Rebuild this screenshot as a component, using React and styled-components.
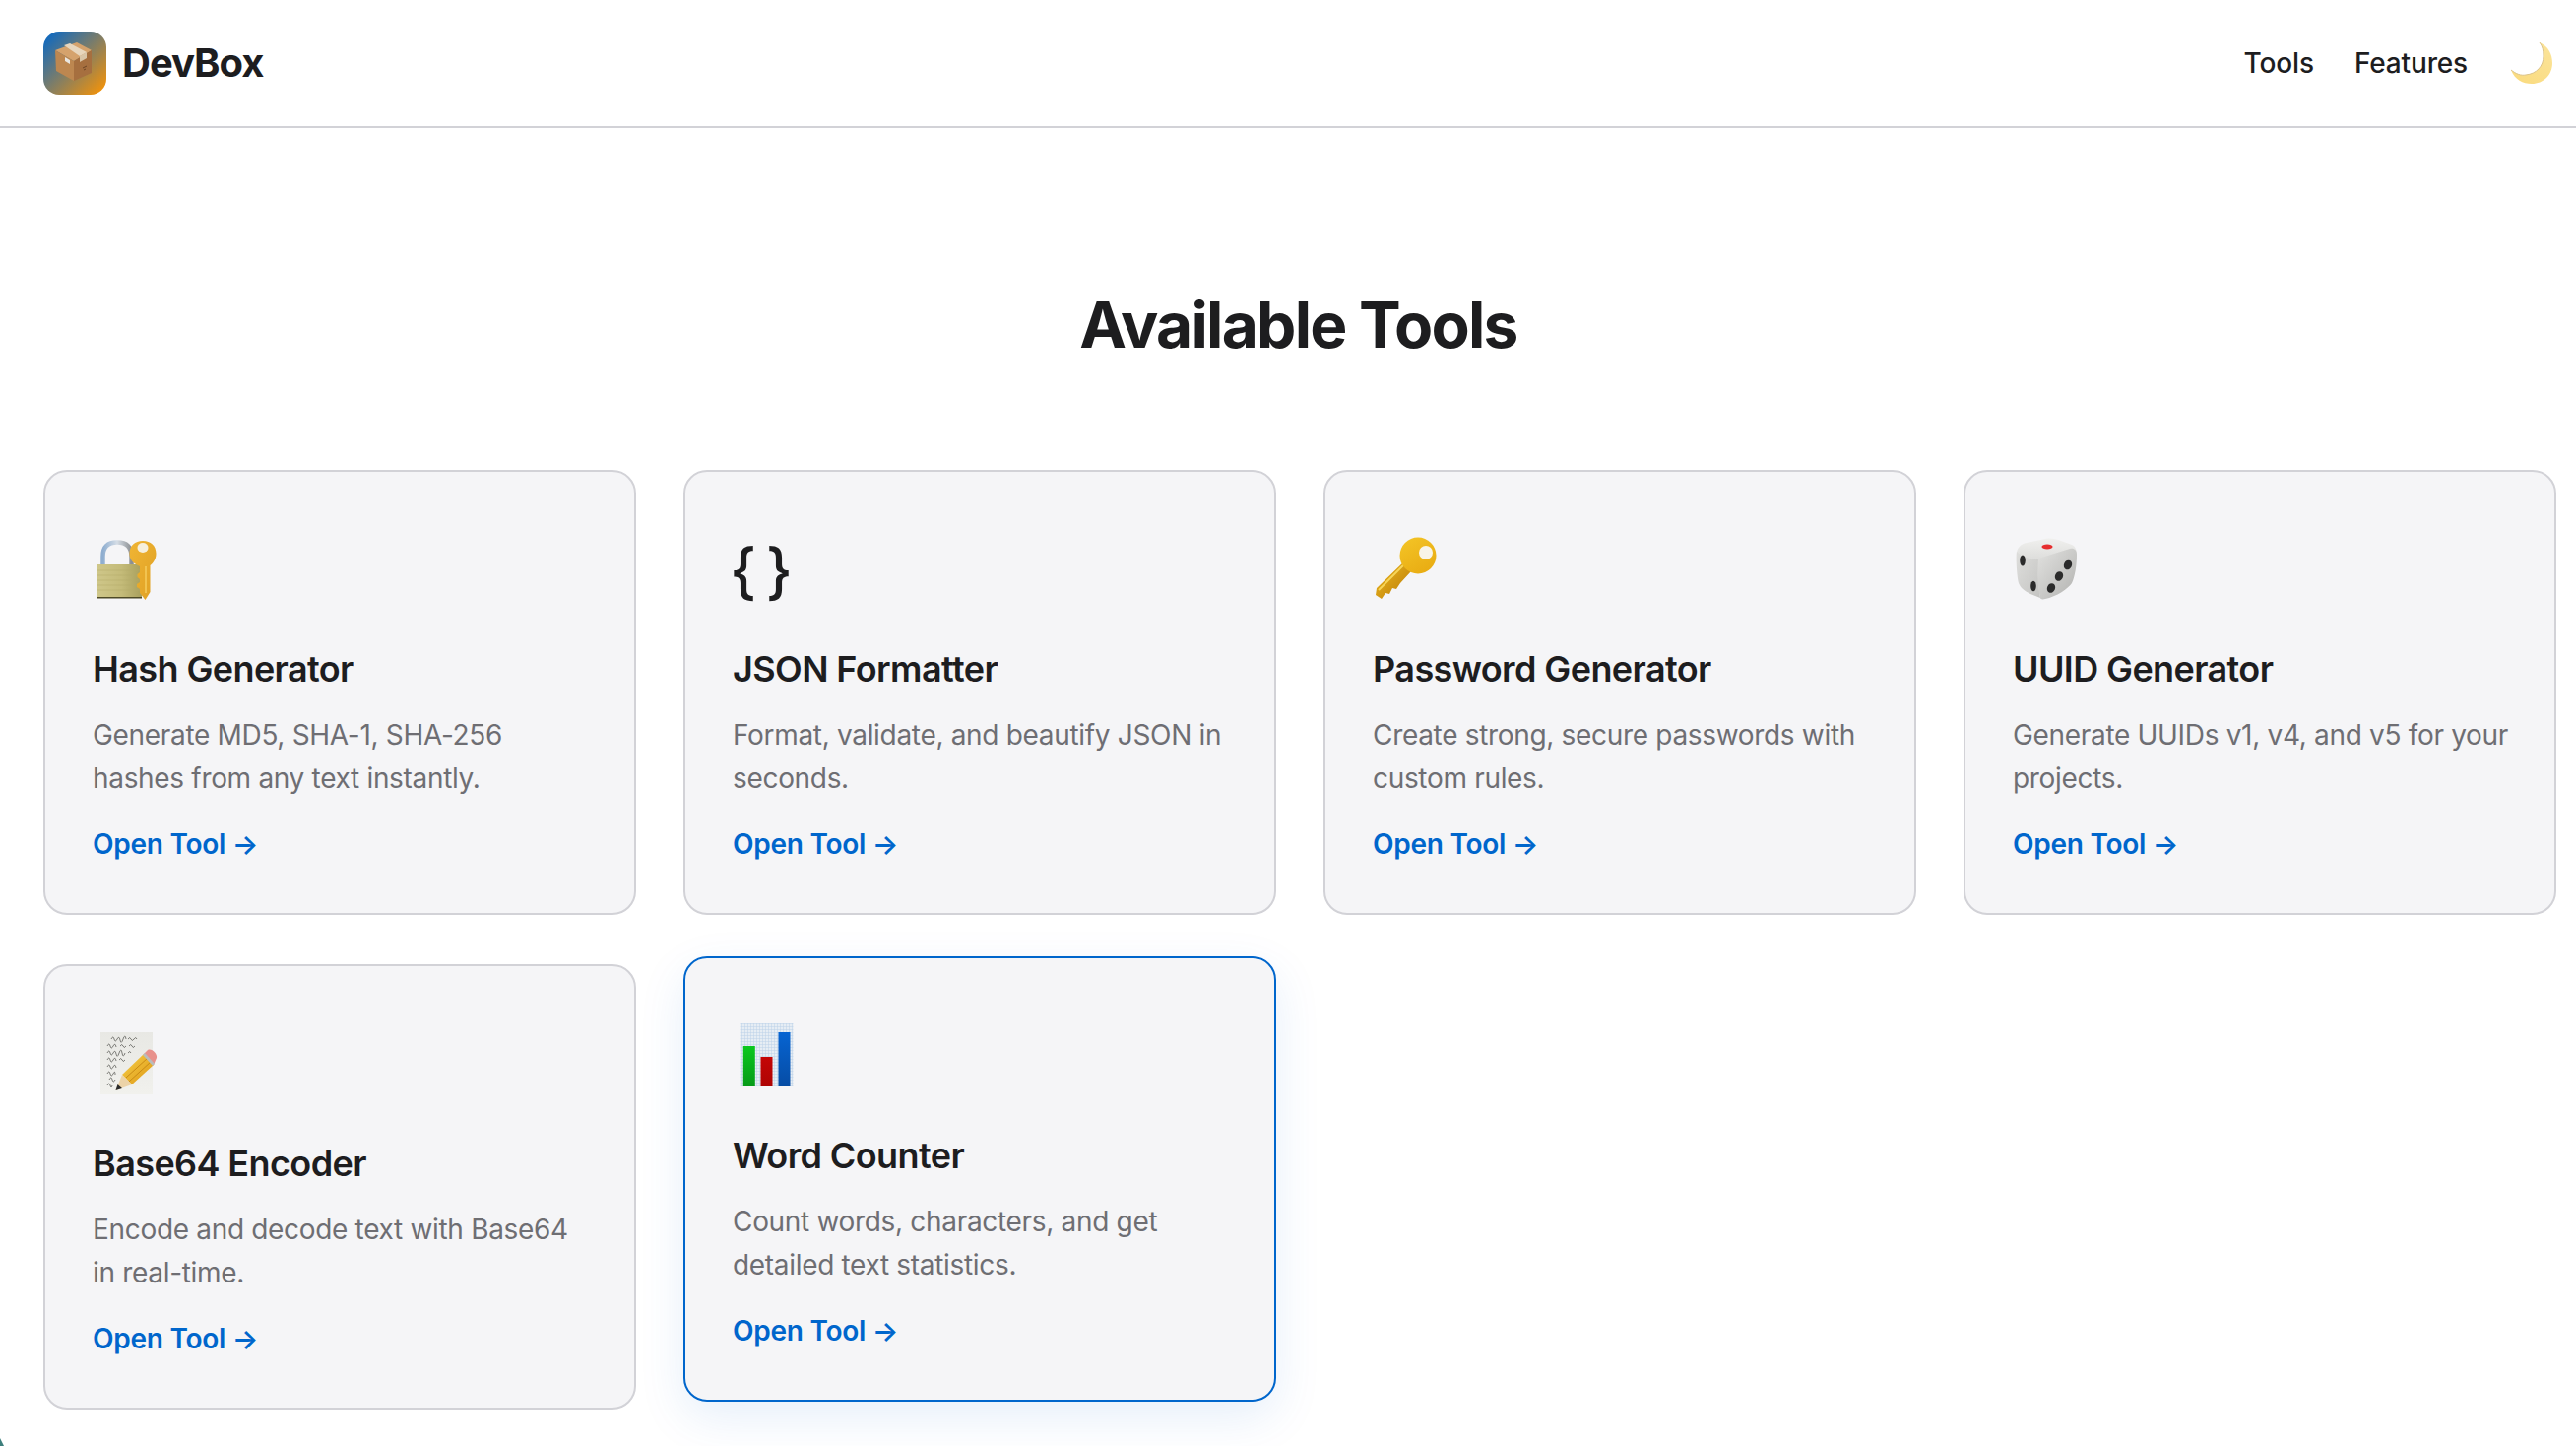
import React from 'react'
import styled, { createGlobalStyle } from 'styled-components'

const GlobalStyle = createGlobalStyle`
  * { box-sizing: border-box; }
  html, body { margin: 0; padding: 0; background: #fff; }
  body {
    font-family: Inter, "Liberation Sans", sans-serif;
    color: #1d1d1f;
    overflow: hidden;
  }
`

const Page = styled.div`
  position: relative;
  width: 2616px;
  height: 1468px;
  overflow: hidden;
`

const Header = styled.header`
  height: 130px;
  border-bottom: 2px solid #d2d2d7;
  padding: 0 24px 0 44px;
  display: flex;
  align-items: center;
  justify-content: space-between;
`

const Brand = styled.div`
  display: flex;
  align-items: center;
  gap: 16px;
`

const LogoTile = styled.div`
  width: 64px;
  height: 64px;
  border-radius: 16px;
  background: linear-gradient(135deg, #0066cc, #ff9500);
`

const BrandName = styled.span`
  font-size: 40px;
  font-weight: 700;
  letter-spacing: -1px;
  margin-top: -2px;
`

const Nav = styled.nav`
  display: flex;
  align-items: center;
  gap: 41px;
`

const NavLink = styled.a`
  font-size: 28px;
  font-weight: 500;
  letter-spacing: -0.15px;
  color: #1d1d1f;
`

const ThemeToggle = styled.button`
  display: flex;
  border: 0;
  padding: 0;
  margin-left: 3px;
  background: none;
`

const Main = styled.main`
  padding: 0 20px 0 44px;
`

const Heading = styled.h1`
  margin: 0;
  padding: 160px 3px 84px 0;
  height: 347px;
  font-size: 64px;
  line-height: 80px;
  font-weight: 700;
  letter-spacing: -1.75px;
  text-align: center;
`

const Grid = styled.div`
  display: grid;
  grid-template-columns: repeat(4, minmax(0, 1fr));
  gap: 50px 48px;
`

const Card = styled.article`
  height: 452px;
  padding: 48px;
  border-radius: 24px;
  background: #f5f5f7;
  border: 2px solid ${({ $active }) => ($active ? '#0066cc' : '#d2d2d7')};
  transform: ${({ $active }) => ($active ? 'translateY(-8px)' : 'none')};
  box-shadow: ${({ $active }) => ($active ? '0 16px 48px rgba(0, 102, 204, 0.1)' : 'none')};
`

const IconSlot = styled.div`
  height: 100px;
  display: flex;
  align-items: center;
`

const Braces = styled.span`
  font-size: 62px;
  line-height: 100px;
  font-weight: 500;
  white-space: nowrap;
  word-spacing: -7px;
  margin-left: -3px;
  padding-top: 6px;
`

const CardTitle = styled.h3`
  margin: 27px 0 0;
  font-size: 36px;
  line-height: 50px;
  font-weight: 600;
  letter-spacing: -0.6px;
`

const CardText = styled.p`
  margin: 20px 0 0;
  font-size: 28px;
  line-height: 44px;
  letter-spacing: -0.32px;
  white-space: nowrap;
  color: #6e6e73;
`

const OpenLink = styled.a`
  display: block;
  margin-top: 23px;
  font-size: 28px;
  line-height: 44px;
  font-weight: 600;
  letter-spacing: -0.27px;
  color: #0066cc;
`

const CornerSliver = styled.div`
  position: absolute;
  left: 0;
  bottom: 0;
  width: 4px;
  height: 8px;
  background: #3d7f7c;
  clip-path: polygon(0 0, 100% 100%, 0 100%);
`

function PackageIcon() {
  return (
    <svg width="64" height="64" viewBox="0 0 64 64">
      <path d="M34 11 L49 19 L31 30 L12 19 Z" fill="#d5a26c" />
      <path d="M12 19 L31 30 L31 50 L13 40 Z" fill="#bd8750" />
      <path d="M31 30 L49 19 L49 42 L31 50 Z" fill="#a66f3f" />
      <path d="M21 14 L27 12 L44 21 L37 25 Z" fill="#e8d6bd" />
      <path d="M37 25 L44 21 L44 27 L37 31 Z" fill="#d9c5a8" />
      <path d="M22 26 L27 29 L27 33 L22 30 Z" fill="#e9e6e0" />
      <path d="M40 37 L44 35 M41 39 L43 38" stroke="#6d4525" strokeWidth="1" />
    </svg>
  )
}

function MoonIcon() {
  return (
    <svg width="42" height="42" viewBox="0 0 42 42">
      <defs>
        <linearGradient id="moonFill" x1="0.9" y1="0" x2="0.2" y2="1">
          <stop offset="0" stopColor="#fbe49a" />
          <stop offset="1" stopColor="#fadb80" />
        </linearGradient>
      </defs>
      <path
        d="M29 0 C38 4 42 12 42 21 C42 33 33 42 21 42 C12 42 4 38 0 28 C5 32 10 34 15 33 C26 32 33 24 33 14 C33 8 32 4 29 0 Z"
        fill="url(#moonFill)"
      />
      <path d="M0 28 C5 32 10 34 15 33 C26 32 33 24 33 14 C33 8 32 4 29 0" fill="none" stroke="#dcc48a" strokeWidth="1" />
    </svg>
  )
}

function LockKeyIcon() {
  return (
    <svg width="70" height="70" viewBox="0 0 70 70">
      <defs>
        <linearGradient id="lockBody" x1="0" y1="0" x2="1" y2="0">
          <stop offset="0" stopColor="#cfc78a" />
          <stop offset="0.55" stopColor="#c4bb79" />
          <stop offset="1" stopColor="#a89f5c" />
        </linearGradient>
        <linearGradient id="lockBar" x1="0" y1="0" x2="1" y2="0">
          <stop offset="0" stopColor="#8faed0" />
          <stop offset="0.5" stopColor="#d5dde6" />
          <stop offset="1" stopColor="#8c8f92" />
        </linearGradient>
        <linearGradient id="lockKey" x1="0" y1="0" x2="1" y2="1">
          <stop offset="0" stopColor="#f0b534" />
          <stop offset="1" stopColor="#dfa024" />
        </linearGradient>
      </defs>
      <path d="M10.5 32 V23 C10.5 12 17 8.5 25 8.5 C33 8.5 39.5 12 39.5 23 V32" fill="none" stroke="url(#lockBar)" strokeWidth="4.5" />
      <rect x="4" y="31" width="46" height="34" rx="1" fill="url(#lockBody)" />
      <path d="M4 37 H50 M4 42 H50 M4 47 H50 M4 52 H50 M4 57 H50" stroke="#b5ad6c" strokeWidth="0.7" opacity="0.7" />
      <rect x="4" y="64" width="46" height="1.5" fill="#4e4a26" />
      <path
        d="M48 33 C41 30 37.5 26 37.5 20 C37.5 12 43 7 51 7 C59 7 64.5 12 64.5 20 C64.5 26 61 30 58.5 32 V59 L53.5 67 L48 60 V56 L45 54 V51 L48 49 V46 L45.5 44 V41 L48 39 Z"
        fill="url(#lockKey)"
      />
      <ellipse cx="51" cy="14" rx="5.5" ry="5" fill="#f6efdc" />
      <path d="M54 33 V60" stroke="#f6cc5c" strokeWidth="1.5" />
    </svg>
  )
}

function KeyIcon() {
  return (
    <svg width="70" height="70" viewBox="0 0 70 70">
      <defs>
        <linearGradient id="goldHead" x1="0.2" y1="0" x2="0.8" y2="1">
          <stop offset="0" stopColor="#f3c325" />
          <stop offset="1" stopColor="#e8ab12" />
        </linearGradient>
        <linearGradient id="goldStem" x1="0" y1="0" x2="1" y2="1">
          <stop offset="0" stopColor="#f0bb20" />
          <stop offset="1" stopColor="#b87a08" />
        </linearGradient>
      </defs>
      <path
        d="M31 29 L4 55 L3 62 L9 66 L13 60 L17 61 L20 55 L24 56 L28 50 L39 38 Z"
        fill="url(#goldStem)"
      />
      <path d="M32 31 L6 57" stroke="#f7d65a" strokeWidth="2" />
      <circle cx="46" cy="22" r="18.5" fill="url(#goldHead)" />
      <circle cx="54" cy="19" r="7" fill="#f8f4e8" />
    </svg>
  )
}

function DieIcon() {
  return (
    <svg width="70" height="70" viewBox="0 0 70 70">
      <defs>
        <linearGradient id="dieTop" x1="0" y1="0" x2="0" y2="1">
          <stop offset="0" stopColor="#f0f0ee" />
          <stop offset="1" stopColor="#dcdcda" />
        </linearGradient>
        <linearGradient id="dieLeft" x1="0" y1="0" x2="1" y2="1">
          <stop offset="0" stopColor="#dededc" />
          <stop offset="1" stopColor="#c4c4c2" />
        </linearGradient>
        <linearGradient id="dieRight" x1="0" y1="0" x2="1" y2="1">
          <stop offset="0" stopColor="#e2e2e0" />
          <stop offset="1" stopColor="#b2b2b0" />
        </linearGradient>
      </defs>
      <path d="M4 20 C4 15 8 10 14 9 L33 5 C38 4 44 5 49 7 L60 11 C64 13 65 17 65 21 L26 27 C18 27 4 24 4 20 Z" fill="url(#dieTop)" />
      <path d="M4 18 C3 22 4 42 6 50 C8 55 12 58 18 61 L28 65 C26 52 25 38 27 26 C18 26 8 23 4 18 Z" fill="url(#dieLeft)" />
      <path d="M26 25 L58 15 C62 14 65 16 65 21 C65 32 63 44 60 50 C57 55 44 64 33 66 C30 67 28 66 28 65 C25 52 25 38 26 25 Z" fill="url(#dieRight)" />
      <ellipse cx="35" cy="13" rx="5.5" ry="2.6" fill="#e62e2e" />
      <ellipse cx="10" cy="27" rx="2.8" ry="5.5" fill="#2b2b2b" />
      <ellipse cx="21" cy="53" rx="2.8" ry="5.2" fill="#2b2b2b" />
      <ellipse cx="56" cy="31.5" rx="4" ry="5" transform="rotate(25 56 31.5)" fill="#2b2b2b" />
      <ellipse cx="47" cy="43" rx="4" ry="5" transform="rotate(25 47 43)" fill="#2b2b2b" />
      <ellipse cx="39" cy="55" rx="4" ry="5" transform="rotate(25 39 55)" fill="#2b2b2b" />
    </svg>
  )
}

function MemoIcon() {
  const scribbles = [
    'M19 11 q2 -4 3 0 t3 0 t3 1 t3 -1 t3 0 m2 0 q2 -3 3 0 t3 0 t3 0',
    'M15 18 q2 -4 3 0 t3 0 t3 1 m4 -1 q2 -3 3 0 t3 0 m3 0 q2 -3 3 0 t3 0',
    'M15 25 q2 -4 3 0 t3 0 t3 1 t3 -1 t3 0 t3 0 m3 0 q2 -3 3 0',
    'M15 32 q2 -4 3 0 t3 0 t3 1 m3 -1 q2 -3 3 0 t3 0',
    'M15 39 q2 -4 3 0 t3 0 t3 1',
    'M15 46 q2 -4 3 0 t3 0 t2 1',
    'M17 52 q2 -4 3 0 t3 0',
    'M15 58 q2 -4 3 0 t2 0',
  ]
  return (
    <svg width="70" height="70" viewBox="0 0 70 70">
      <defs>
        <linearGradient id="memoPaper" x1="0" y1="0" x2="0" y2="1">
          <stop offset="0" stopColor="#e8e8e4" />
          <stop offset="1" stopColor="#f1f1ed" />
        </linearGradient>
        <linearGradient id="memoPencil" x1="0" y1="0" x2="1" y2="1">
          <stop offset="0" stopColor="#f7d24c" />
          <stop offset="1" stopColor="#dc9410" />
        </linearGradient>
      </defs>
      <rect x="8" y="4" width="53" height="63" fill="url(#memoPaper)" />
      {scribbles.map((d) => (
        <path key={d} d={d} fill="none" stroke="#5f5f5b" strokeWidth="0.8" />
      ))}
      <path d="M30 47 L52 26 L62 37 L40 57 Z" fill="url(#memoPencil)" />
      <path d="M34 50 L56 30 M37 54 L59 34" stroke="#c98a14" strokeWidth="1" />
      <path d="M52 26 L56 22 C60 20 66 26 65 30 L62 37 Z" fill="#e8918c" />
      <path d="M51 27 L61 38 L63 36 L53 25 Z" fill="#b9bcbc" />
      <path d="M23.5 63 L30 47 L40 57 Z" fill="#ecd3a8" />
      <path d="M23.5 63 L25.5 57 L30 61 Z" fill="#2a2a2a" />
    </svg>
  )
}

function ChartIcon() {
  return (
    <svg width="70" height="70" viewBox="0 0 70 70">
      <defs>
        <pattern id="chartGrid" width="3" height="3" patternUnits="userSpaceOnUse">
          <rect width="3" height="3" fill="#e6edf4" />
          <path d="M0 0 H3 M0 0 V3" stroke="#bcd2e8" strokeWidth="1" />
        </pattern>
        <linearGradient id="barGreen" x1="0" y1="0" x2="0" y2="1">
          <stop offset="0" stopColor="#0ac81e" />
          <stop offset="1" stopColor="#069a18" />
        </linearGradient>
        <linearGradient id="barRed" x1="0" y1="0" x2="0" y2="1">
          <stop offset="0" stopColor="#c40606" />
          <stop offset="1" stopColor="#ae0303" />
        </linearGradient>
        <linearGradient id="barBlue" x1="0" y1="0" x2="0" y2="1">
          <stop offset="0" stopColor="#0664d2" />
          <stop offset="1" stopColor="#064ca4" />
        </linearGradient>
      </defs>
      <rect x="7.5" y="3" width="54" height="64" fill="url(#chartGrid)" />
      <rect x="10.8" y="26" width="12" height="41" fill="url(#barGreen)" />
      <rect x="28.5" y="37" width="12" height="30" fill="url(#barRed)" />
      <rect x="46.5" y="12" width="12" height="55" fill="url(#barBlue)" />
    </svg>
  )
}

const tools = [
  { name: 'Hash Generator', text: ['Generate MD5, SHA-1, SHA-256', 'hashes from any text instantly.'], icon: <LockKeyIcon /> },
  { name: 'JSON Formatter', text: ['Format, validate, and beautify JSON in', 'seconds.'], icon: <Braces>{'{ }'}</Braces> },
  { name: 'Password Generator', text: ['Create strong, secure passwords with', 'custom rules.'], icon: <KeyIcon /> },
  { name: 'UUID Generator', text: ['Generate UUIDs v1, v4, and v5 for your', 'projects.'], icon: <DieIcon /> },
  { name: 'Base64 Encoder', text: ['Encode and decode text with Base64', 'in real-time.'], icon: <MemoIcon /> },
  { name: 'Word Counter', text: ['Count words, characters, and get', 'detailed text statistics.'], icon: <ChartIcon />, active: true },
]

export default function App() {
  return (
    <Page>
      <GlobalStyle />
      <Header>
        <Brand>
          <LogoTile>
            <PackageIcon />
          </LogoTile>
          <BrandName>DevBox</BrandName>
        </Brand>
        <Nav>
          <NavLink>Tools</NavLink>
          <NavLink>Features</NavLink>
          <ThemeToggle>
            <MoonIcon />
          </ThemeToggle>
        </Nav>
      </Header>
      <Main>
        <Heading>Available Tools</Heading>
        <Grid>
          {tools.map((tool) => (
            <Card key={tool.name} $active={tool.active}>
              <IconSlot>{tool.icon}</IconSlot>
              <CardTitle>{tool.name}</CardTitle>
              <CardText>
                {tool.text[0]}
                <br />
                {tool.text[1]}
              </CardText>
              <OpenLink>Open Tool →</OpenLink>
            </Card>
          ))}
        </Grid>
      </Main>
      <CornerSliver />
    </Page>
  )
}
